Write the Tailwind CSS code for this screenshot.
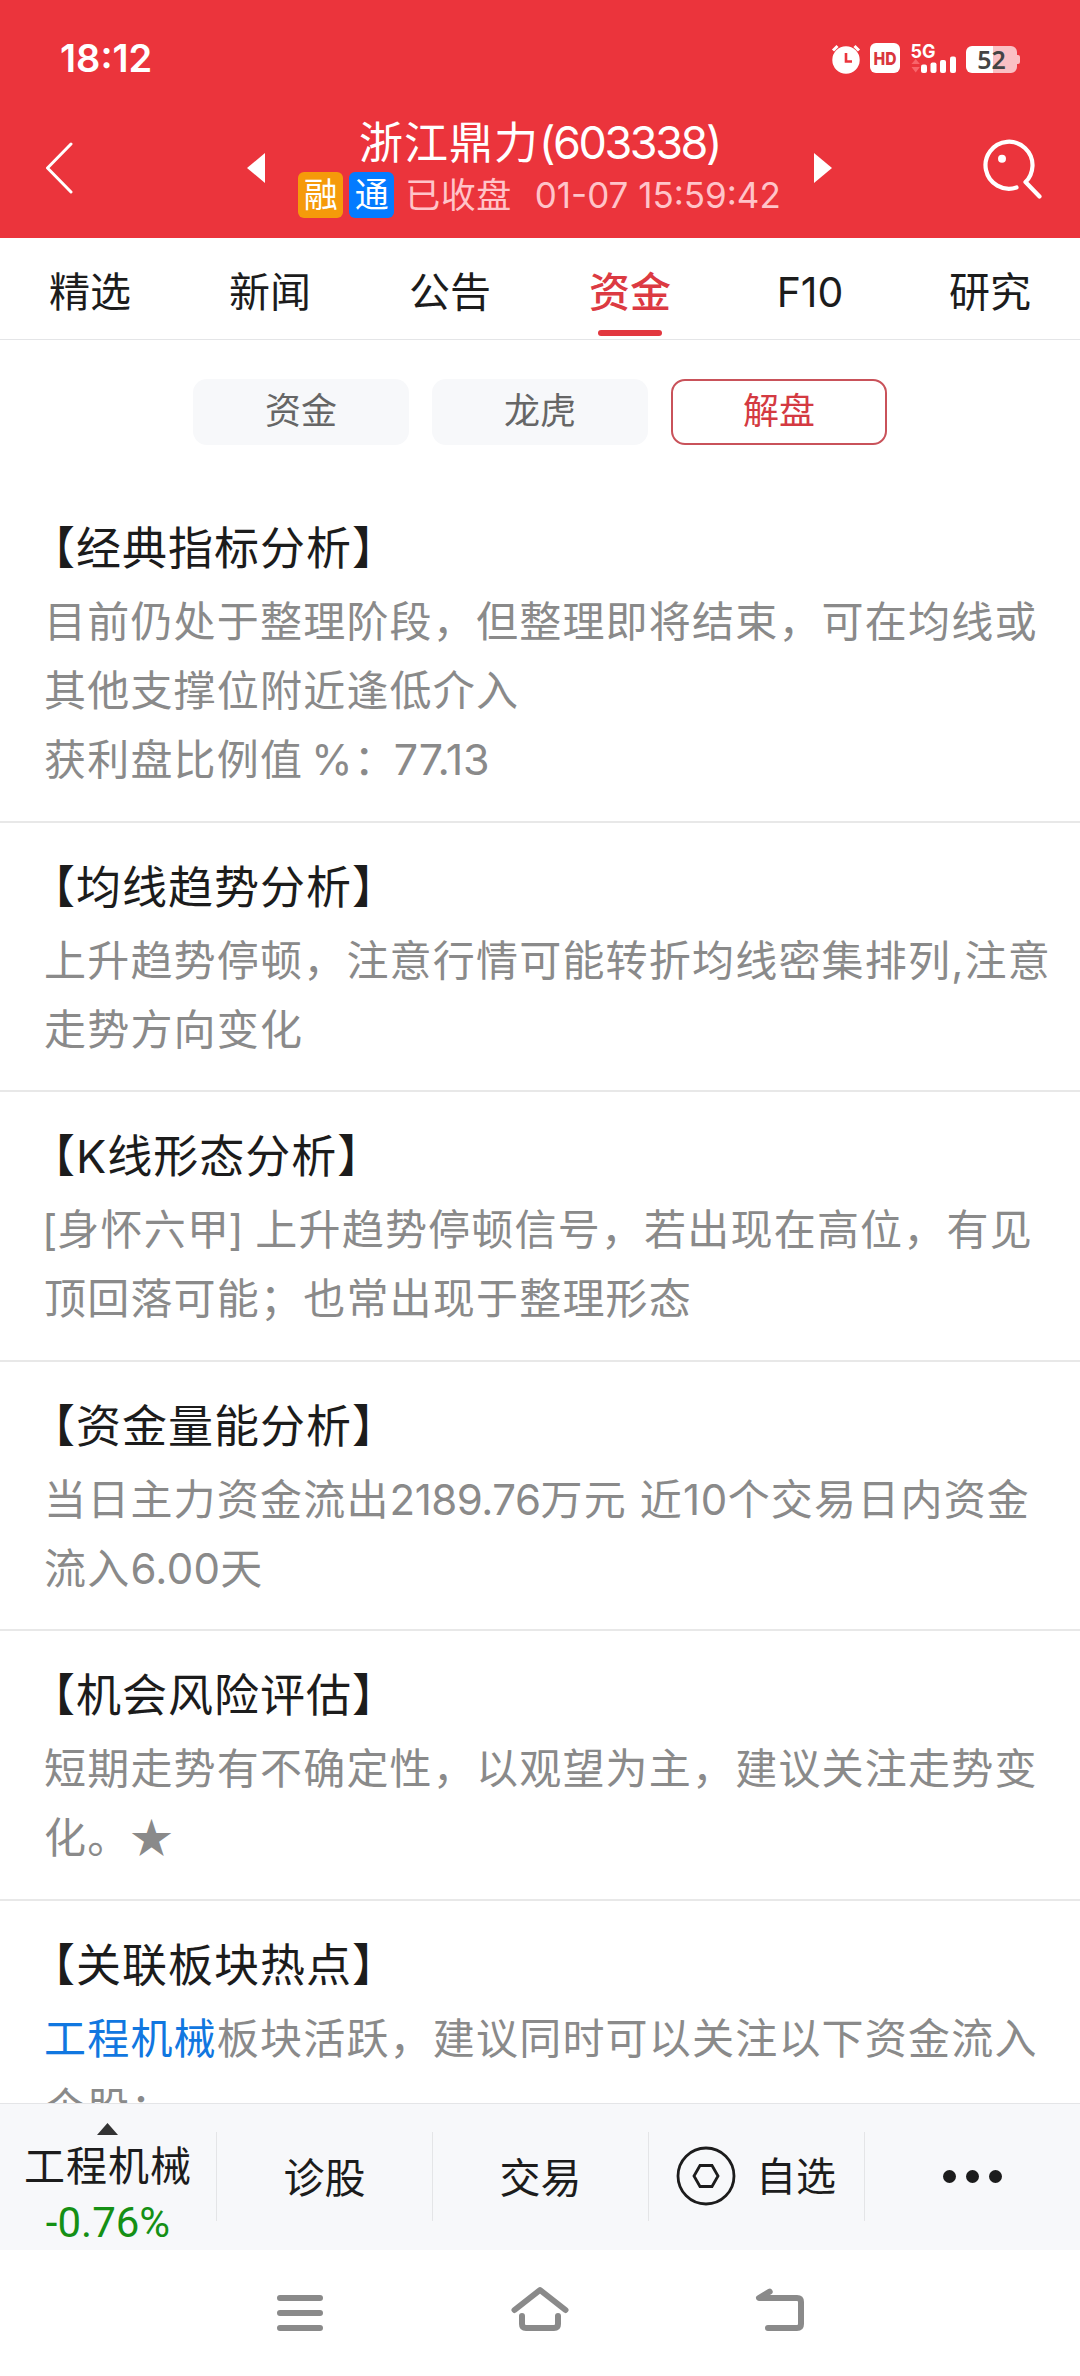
<!DOCTYPE html>
<html lang="zh-CN">
<head>
    <meta charset="UTF-8">
    <meta name="viewport" content="width=device-width, initial-scale=1.0">
    <title>浙江鼎力(603338)</title>
    <script src="https://cdn.jsdelivr.net/npm/@tailwindcss/browser@4"></script>
</head>
<body class="bg-white overflow-hidden font-[Inter,'Noto_Sans_CJK_SC',sans-serif]">
    <div class="w-[1080px] h-[2376px] flex flex-col overflow-hidden">
        <!-- Header -->
        <header class="h-[238px] shrink-0 bg-[#eb343c] text-white">
            <!-- Status Bar -->
            <div class="h-[98px] pt-[18px] pl-[60px] pr-[60px] flex items-center justify-between">
                <span class="text-[38px] font-semibold">18:12</span>
                <svg class="w-[190px] h-[34px]" viewBox="830 41 190 34">
                    <!-- alarm -->
                    <circle cx="846" cy="60" r="13.7" fill="#fff"/>
                    <path d="M833 50.500l4.500-4.500M859 50.500l-4.500-4.500" stroke="#fff" stroke-width="3"/>
                    <path d="M846 53v8.500h6" fill="none" stroke="#eb343c" stroke-width="2.600"/>
                    <!-- HD -->
                    <rect x="870" y="43" width="30" height="30" rx="6" fill="#fff"/>
                    <text x="885" y="64.500" text-anchor="middle" font-family="Inter" font-size="18" font-weight="800" textLength="23" lengthAdjust="spacingAndGlyphs" fill="#d9363d">HD</text>
                    <!-- signal -->
                    <text x="910.500" y="57.500" font-family="Inter" font-size="19" font-weight="700" textLength="25" lengthAdjust="spacingAndGlyphs" fill="#fff">5G</text>
                    <path d="M911.500 64l4.200-5 4.200 5zM911.500 67l4.200 5.500 4.200-5.500z" fill="#f8656b"/>
                    <rect x="921" y="64.500" width="6" height="8.500" rx="2" fill="#fff"/>
                    <rect x="930.500" y="62.500" width="6" height="10.500" rx="2" fill="#fff"/>
                    <rect x="940" y="60" width="6" height="13" rx="2" fill="#fff"/>
                    <rect x="950" y="56.500" width="6" height="16.500" rx="2" fill="#fff"/>
                    <!-- battery -->
                    <path d="M993 46h18a6 6 0 0 1 6 6v3h1a2 2 0 0 1 2 2v5a2 2 0 0 1-2 2h-1v3a6 6 0 0 1-6 6h-18z" fill="#fac0c4"/>
                    <path d="M993 46h-21a6 6 0 0 0-6 6v15a6 6 0 0 0 6 6h21z" fill="#fff"/>
                    <text x="991.500" y="69" text-anchor="middle" font-family="Noto Sans" font-size="25" font-weight="600" fill="#444">52</text>
                </svg>
            </div>
            <!-- Title Bar -->
            <div class="h-[140px] pl-[44px] pr-[36px] flex items-center">
                <svg class="w-[30px] h-[52px]" viewBox="0 0 30 52" fill="none" stroke="#fff" stroke-width="3" stroke-linecap="round" stroke-linejoin="round">
                    <path d="M27 2L3.500 26 27 50"/>
                </svg>
                <svg class="w-[18px] h-[30px] ml-[173px]" viewBox="0 0 18 30" fill="#fff"><path d="M18 0v30L0 15z"/></svg>
                <div class="flex-1 pt-[2px] flex flex-col items-center">
                    <h1 class="h-[52px] leading-[52px] text-[44px] tracking-[1px] whitespace-nowrap">浙江鼎力<span class="text-[45px] tracking-[-2.4px]">(603338)</span></h1>
                    <div class="h-[52px] flex items-center text-[35px] whitespace-nowrap">
                        <span class="w-[45px] h-[46px] leading-[46px] rounded-[6px] bg-[#f59a0a] text-[34px] text-center">融</span>
                        <span class="w-[45px] h-[46px] leading-[46px] ml-[6px] rounded-[6px] bg-[#047bff] text-[34px] text-center">通</span>
                        <span class="ml-[11px] text-[#ffc4c9] tracking-[0.5px]">已收盘</span>
                        <span class="ml-[23px] text-[#ffc4c9]">01-07 15:59:42</span>
                    </div>
                </div>
                <svg class="w-[18px] h-[30px]" viewBox="0 0 18 30" fill="#fff"><path d="M0 0v30l18-15z"/></svg>
                <svg class="w-[62px] h-[62px] ml-[150px]" viewBox="982 137 62 62" fill="none" stroke="#fff" stroke-width="4.200" stroke-linecap="round" stroke-linejoin="round">
                    <path d="M1016.500 187.500A23.500 23.500 0 1 1 1032.500 166Q1032 176 1025.500 182L1039.500 196.500"/>
                    <circle cx="1002" cy="158.700" r="4" fill="#fff" stroke="none"/>
                </svg>
            </div>
        </header>

        <!-- Tabs -->
        <nav class="h-[102px] shrink-0 grid grid-cols-6 border-b border-[#e4e5e7] text-[41px] leading-[60px] text-[#1c1c1c] text-center">
            <div class="pt-[24px]">精选</div>
            <div class="pt-[24px]">新闻</div>
            <div class="pt-[24px]">公告</div>
            <div class="pt-[24px] flex flex-col items-center font-medium text-[#dc3a42]">
                <span>资金</span>
                <span class="mt-[8px] w-[64px] h-[6px] rounded-full bg-[#e2373f]"></span>
            </div>
            <div class="pt-[24px] text-[41px]">F10</div>
            <div class="pt-[24px]">研究</div>
        </nav>

        <!-- Sub Tabs -->
        <div class="h-[144px] shrink-0 pt-[39px] flex justify-center gap-[23px] text-[36px] leading-[65px] text-[#666] text-center">
            <div class="w-[216px] h-[66px] rounded-[14px] bg-[#f7f8fa]">资金</div>
            <div class="w-[216px] h-[66px] rounded-[14px] bg-[#f7f8fa]">龙虎</div>
            <div class="w-[216px] h-[66px] rounded-[14px] border-2 border-[#c9525a] leading-[61px] text-[#d43a42]">解盘</div>
        </div>

        <!-- Analysis List -->
        <main class="flex-1 min-h-0 overflow-hidden text-[42px] leading-[69px] tracking-[1.2px] text-[#8a8a8a] whitespace-nowrap">
            <section class="pt-[32px] pb-[26.500px] pl-[44px] border-b-2 border-[#e8e8e8]">
                <h2 class="-ml-[14px] mb-[5px] text-[45px] leading-[66px] tracking-[1px] text-[#1c1c1c]">【经典指标分析】</h2>
                <p>目前仍处于整理阶段，但整理即将结束，可在均线或<br>其他支撑位附近逢低介入<br><span class="[word-spacing:-5px]">获利盘比例值 %：</span><span class="-ml-[3px] text-[43px] tracking-[-0.3px]">77.13</span></p>
            </section>
            <section class="pt-[32px] pb-[26.500px] pl-[44px] border-b-2 border-[#e8e8e8]">
                <h2 class="-ml-[14px] mb-[5px] text-[45px] leading-[66px] tracking-[1px] text-[#1c1c1c]">【均线趋势分析】</h2>
                <p>上升趋势停顿，注意行情可能转折均线密集排列,注意<br>走势方向变化</p>
            </section>
            <section class="pt-[32px] pb-[26.500px] pl-[44px] border-b-2 border-[#e8e8e8]">
                <h2 class="-ml-[14px] mb-[5px] text-[45px] leading-[66px] tracking-[1px] text-[#1c1c1c]">【K线形态分析】</h2>
                <p><span class="-ml-[2px] tracking-[0px]">[</span>身怀六甲<span class="-ml-[2px] tracking-[0px]">] </span>上升趋势停顿信号，若出现在高位，有见<br>顶回落可能；也常出现于整理形态</p>
            </section>
            <section class="pt-[32px] pb-[26.500px] pl-[44px] border-b-2 border-[#e8e8e8]">
                <h2 class="-ml-[14px] mb-[5px] text-[45px] leading-[66px] tracking-[1px] text-[#1c1c1c]">【资金量能分析】</h2>
                <p>当日主力资金流出<span class="tracking-[-0.5px]">2189.76</span>万元 近<span class="tracking-[0.5px]">10</span>个交易日内资金<br>流入<span class="tracking-[0.3px]">6.00</span>天</p>
            </section>
            <section class="pt-[32px] pb-[26.500px] pl-[44px] border-b-2 border-[#e8e8e8]">
                <h2 class="-ml-[14px] mb-[5px] text-[45px] leading-[66px] tracking-[1px] text-[#1c1c1c]">【机会风险评估】</h2>
                <p>短期走势有不确定性，以观望为主，建议关注走势变<br>化。<span class="leading-none font-['Noto_Sans_CJK_SC']">★</span></p>
            </section>
            <section class="pt-[32px] pl-[44px]">
                <h2 class="-ml-[14px] mb-[5px] text-[45px] leading-[66px] tracking-[1px] text-[#1c1c1c]">【关联板块热点】</h2>
                <p><a class="text-[#1177e0]">工程机械</a>板块活跃，建议同时可以关注以下资金流入<br>个股：</p>
            </section>
        </main>

        <!-- Bottom Toolbar -->
        <footer class="h-[147px] shrink-0 flex border-t border-[#e4e5e7] bg-[#f7f8fa] text-[41px] text-[#1c1c1c]">
            <div class="w-[216px] pt-[19px] flex flex-col items-center">
                <svg class="w-[21px] h-[12px] mr-[1px] mb-[3px]" viewBox="0 0 21 12" fill="#333"><path d="M10.500 0L21 12H0z"/></svg>
                <span class="h-[56px] leading-[56px] tracking-[1px]">工程机械</span>
                <span class="h-[56px] leading-[58px] font-[Roboto] text-[42px] text-[#159015]">-0.76%</span>
            </div>
            <div class="w-[216px] h-[89px] mt-[28px] border-l border-[#e4e5e7] flex items-center justify-center pt-[4px]">诊股</div>
            <div class="w-[216px] h-[89px] mt-[28px] border-l border-[#e4e5e7] flex items-center justify-center pt-[4px]">交易</div>
            <div class="w-[216px] h-[89px] mt-[28px] border-l border-[#e4e5e7] flex items-center pl-[27px] pb-[2px] text-[40px]">
                <svg class="w-[60px] h-[60px] mr-[20px]" viewBox="0 0 60 60" fill="none" stroke="#1c1c1c" stroke-width="2.800">
                    <circle cx="30" cy="30" r="28"/>
                    <path d="M24 19.500h12L42 30l-6 10.500H24L18 30z"/>
                </svg>
                <span class="pt-[2px]">自选</span>
            </div>
            <div class="w-[216px] h-[89px] mt-[28px] border-l border-[#e4e5e7] flex items-center justify-center gap-[10px]">
                <span class="w-[13px] h-[13px] rounded-full bg-[#1c1c1c]"></span>
                <span class="w-[13px] h-[13px] rounded-full bg-[#1c1c1c]"></span>
                <span class="w-[13px] h-[13px] rounded-full bg-[#1c1c1c]"></span>
            </div>
        </footer>

        <!-- System Navigation -->
        <div class="h-[126px] shrink-0 pt-[36px] pl-[270px] flex gap-[180px]">
            <svg class="w-[60px] h-[48px]" viewBox="270 2286 60 48" fill="none" stroke="#8a8a8a" stroke-width="6" stroke-linecap="round">
                <path d="M280 2298h40M280 2313h40M280 2328h40"/>
            </svg>
            <svg class="w-[60px] h-[48px]" viewBox="510 2286 60 48" fill="none" stroke="#8a8a8a" stroke-width="6" stroke-linecap="round" stroke-linejoin="round">
                <path d="M514.500 2310L540 2290l25.500 20M522 2316v8q0 4 4 4h28q4 0 4-4v-8"/>
            </svg>
            <svg class="w-[60px] h-[48px]" viewBox="750 2286 60 48" fill="none" stroke="#8a8a8a" stroke-width="6" stroke-linecap="round" stroke-linejoin="round">
                <path d="M769.700 2291.700L759 2298h38q4 0 4 4v22q0 4-4 4h-29"/>
            </svg>
        </div>
    </div>
</body>
</html>
